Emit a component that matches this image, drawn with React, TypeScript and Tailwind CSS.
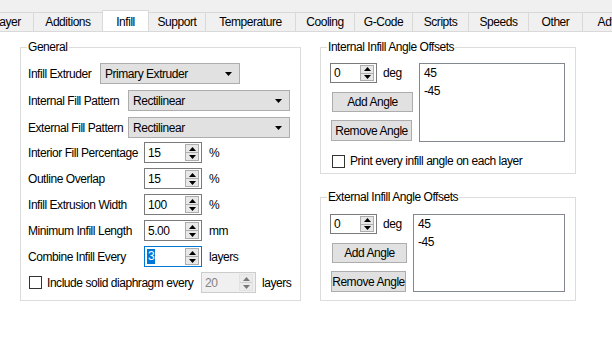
import React from "react";

const tabs = [
  { label: "Layer", w: "w-[53px]" },
  { label: "Additions", w: "w-[69px]" },
  { label: "Infill", w: "w-[47px]", active: true },
  { label: "Support", w: "w-[57px]" },
  { label: "Temperature", w: "w-[90px]" },
  { label: "Cooling", w: "w-[59px]" },
  { label: "G-Code", w: "w-[58px]" },
  { label: "Scripts", w: "w-[56px]" },
  { label: "Speeds", w: "w-[60px]" },
  { label: "Other", w: "w-[54px]" },
  { label: "Advanced", w: "w-[80px]" },
];

const Arrow = ({ up = false }: { up?: boolean }) => (
  <svg width="7" height="4" viewBox="0 0 7 4" className="block">
    {up ? <polygon points="0,4 7,4 3.5,0" fill="#000" /> : <polygon points="0,0 7,0 3.5,4" fill="#000" />}
  </svg>
);

const Group = ({
  title,
  className,
  children,
}: {
  title: string;
  className: string;
  children: React.ReactNode;
}) => (
  <div className={`relative border border-[#dcdcdc] ${className}`}>
    <span className="absolute left-[6px] -top-[9px] bg-white px-px leading-[16px]">{title}</span>
    {children}
  </div>
);

const Combo = ({ value, w }: { value: string; w: string }) => (
  <div className={`flex h-[21px] ${w} items-center justify-between border border-[#adadad] bg-[#e1e1e1] pl-[4px] pr-[7px]`}>
    <span>{value}</span>
    <Arrow />
  </div>
);

const Spin = ({
  value,
  w,
  h = "h-[21px]",
  focused = false,
  disabled = false,
}: {
  value: string;
  w: string;
  h?: string;
  focused?: boolean;
  disabled?: boolean;
}) => {
  const border = focused ? "border-[#0078d7]" : disabled ? "border-[#cccccc]" : "border-[#7a7a7a]";
  return (
    <div className={`flex ${h} ${w} border ${border} ${disabled ? "bg-[#f0f0f0] text-[#838383]" : "bg-white"}`}>
      <div className="flex flex-1 items-center pl-[2px]">
        {focused ? <span className="bg-[#0078d7] px-px text-white leading-[15px]">{value}</span> : <span className="pl-px">{value}</span>}
      </div>
      <div className={`my-[1px] mr-[2px] flex w-[14px] flex-col border ${disabled ? "border-[#d5d5d5] opacity-50" : "border-[#adadad]"} bg-[#e8e8e8]`}>
        <div className="flex flex-1 items-center justify-center border-b border-[#adadad]">
          <Arrow up />
        </div>
        <div className="flex flex-1 items-center justify-center">
          <Arrow />
        </div>
      </div>
    </div>
  );
};

const Check = () => <div className="h-[13px] w-[13px] border border-[#333333] bg-white" />;

const Button = ({ label, w, h }: { label: string; w: string; h: string }) => (
  <div className={`flex ${w} ${h} items-center justify-center border border-[#adadad] bg-[#e1e1e1]`}>{label}</div>
);

const SpinRow = ({
  label,
  value,
  unit,
  focused,
  first,
}: {
  label: string;
  value: string;
  unit: string;
  focused?: boolean;
  first?: boolean;
}) => (
  <div className={`flex h-[21px] items-center ${first ? "mt-[4px]" : "mt-[5px]"}`}>
    <span className="w-[116px]">{label}</span>
    <Spin value={value} w="w-[58px]" focused={focused} />
    <span className="ml-[7px]">{unit}</span>
  </div>
);

const AngleGroup = ({
  title,
  className,
  padTop,
  leftW,
  btnW,
  listW,
  listH,
  children,
}: {
  title: string;
  className: string;
  padTop: string;
  leftW: string;
  btnW: string;
  listW: string;
  listH: string;
  children?: React.ReactNode;
}) => (
  <Group title={title} className={className}>
    <div className={`pl-[9px] ${padTop}`}>
      <div className="flex">
        <div className={`${leftW} flex flex-col`}>
          <div className="flex items-center">
            <Spin value="0" w="w-[47px]" h="h-[20px]" />
            <span className="ml-[6px]">deg</span>
          </div>
          <div className="ml-[2px] mt-[9px]">
            <Button label="Add Angle" w={btnW} h="h-[20px]" />
          </div>
          <div className="ml-[1px] mt-[8px]">
            <Button label="Remove Angle" w={btnW} h="h-[21px]" />
          </div>
        </div>
        <div className={`${listW} ${listH} border border-[#828790] bg-white pl-[4px] leading-[18px]`}>
          <div>45</div>
          <div>-45</div>
        </div>
      </div>
      {children}
    </div>
  </Group>
);

export default function App() {
  return (
    <div className="h-[357px] w-[612px] overflow-hidden whitespace-nowrap bg-white font-['Liberation_Sans',Arial,sans-serif] text-[12px] tracking-[-0.45px] text-black">
      <div className="flex h-[32px] items-end overflow-hidden border-b border-[#d9d9d9] bg-[#f0f0f0]">
        <div className="-ml-[19px] flex items-end">
          {tabs.map((t) =>
            t.active ? (
              <div
                key={t.label}
                className={`relative -mb-px -ml-px flex h-[22px] ${t.w} shrink-0 items-center justify-center border-x border-t border-[#d9d9d9] bg-white`}
              >
                {t.label}
              </div>
            ) : (
              <div
                key={t.label}
                className={`flex h-[19px] ${t.w} shrink-0 items-center justify-center border-r border-t border-[#d9d9d9] bg-[#f0f0f0]`}
              >
                {t.label}
              </div>
            )
          )}
        </div>
      </div>

      <div className="flex items-start gap-[19px] pl-[20px] pt-[15px]">
        <Group title="General" className="h-[254px] w-[281px]">
          <div className="flex flex-col pl-[7px] pt-[15px]">
            <div className="flex h-[21px] items-center">
              <span className="w-[72px]">Infill Extruder</span>
              <Combo value="Primary Extruder" w="w-[140px]" />
            </div>
            <div className="mt-[6px] flex h-[21px] items-center">
              <span className="w-[100px]">Internal Fill Pattern</span>
              <Combo value="Rectilinear" w="w-[162px]" />
            </div>
            <div className="mt-[6px] flex h-[21px] items-center">
              <span className="w-[100px]">External Fill Pattern</span>
              <Combo value="Rectilinear" w="w-[162px]" />
            </div>
            <SpinRow first label="Interior Fill Percentage" value="15" unit="%" />
            <SpinRow label="Outline Overlap" value="15" unit="%" />
            <SpinRow label="Infill Extrusion Width" value="100" unit="%" />
            <SpinRow label="Minimum Infill Length" value="5.00" unit="mm" />
            <SpinRow label="Combine Infill Every" value="3" unit="layers" focused />
            <div className="mt-[5px] flex h-[21px] items-center">
              <div className="ml-[1px]">
                <Check />
              </div>
              <span className="ml-[5px] w-[154px]">Include solid diaphragm every</span>
              <Spin value="20" w="w-[55px]" disabled />
              <span className="ml-[6px]">layers</span>
            </div>
          </div>
        </Group>

        <div className="flex flex-col">
          <AngleGroup
            title="Internal Infill Angle Offsets"
            className="h-[127px] w-[256px]"
            padTop="pt-[15px]"
            leftW="w-[89px]"
            btnW="w-[81px]"
            listW="w-[146px]"
            listH="h-[79px]"
          >
            <div className="ml-[2px] mt-[10px] flex items-center">
              <Check />
              <span className="ml-[5px]">Print every infill angle on each layer</span>
            </div>
          </AngleGroup>
          <AngleGroup
            title="External Infill Angle Offsets"
            className="mt-[23px] h-[104px] w-[256px]"
            padTop="pt-[16px]"
            leftW="w-[83px]"
            btnW="w-[75px]"
            listW="w-[152px]"
            listH="h-[78px]"
          />
        </div>
      </div>
    </div>
  );
}
